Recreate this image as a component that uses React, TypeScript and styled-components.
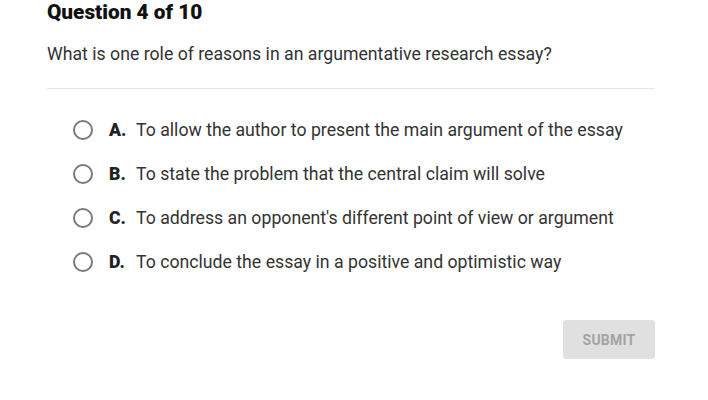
import styled, { createGlobalStyle } from "styled-components";

const GlobalStyle = createGlobalStyle`
  html, body {
    margin: 0;
    padding: 0;
    background: #ffffff;
  }
  body {
    font-family: Roboto, "Liberation Sans", Arial, sans-serif;
  }
`;

const Page = styled.div`
  width: 708px;
  height: 400px;
  padding: 0 53px 0 47px;
  box-sizing: border-box;
  display: flex;
  flex-direction: column;
`;

const Title = styled.h1`
  margin: 0;
  font-size: 20.8px;
  line-height: 25px;
  font-weight: 900;
  color: #111;
`;

const Prompt = styled.p`
  margin: 18px 0 0;
  font-size: 17.7px;
  line-height: 22px;
  color: #333;
`;

const Divider = styled.hr`
  margin: 23px 0 0;
  border: 0;
  border-top: 1px solid #e6e6e6;
`;

const Options = styled.ul`
  list-style: none;
  margin: 30px 0 0;
  padding: 0 0 0 26px;
  display: flex;
  flex-direction: column;
  gap: 22px;
`;

const Option = styled.li`
  display: flex;
  align-items: center;
  height: 22px;
  font-size: 17.7px;
  color: #333;
`;

const Radio = styled.span`
  width: 16px;
  height: 16px;
  border: 2px solid #7a7a7a;
  border-radius: 50%;
  margin-right: 16px;
  flex-shrink: 0;
`;

const Letter = styled.b`
  font-weight: 900;
  color: #222;
  width: 27px;
`;

const Footer = styled.div`
  margin-top: 47px;
  display: flex;
  justify-content: flex-end;
`;

const SubmitButton = styled.button`
  width: 92px;
  height: 39px;
  border: 0;
  border-radius: 3px;
  background: #e0e0e0;
  color: #a3a3a3;
  font-family: Roboto, "Liberation Sans", Arial, sans-serif;
  font-size: 14px;
  font-weight: 700;
  letter-spacing: 0.2px;
`;

const answers = [
  { letter: "A.", text: "To allow the author to present the main argument of the essay" },
  { letter: "B.", text: "To state the problem that the central claim will solve" },
  { letter: "C.", text: "To address an opponent's different point of view or argument" },
  { letter: "D.", text: "To conclude the essay in a positive and optimistic way" },
];

export default function App() {
  return (
    <>
      <GlobalStyle />
      <Page>
        <Title>Question 4 of 10</Title>
        <Prompt>What is one role of reasons in an argumentative research essay?</Prompt>
        <Divider />
        <Options>
          {answers.map((a) => (
            <Option key={a.letter}>
              <Radio />
              <Letter>{a.letter}</Letter>
              <span>{a.text}</span>
            </Option>
          ))}
        </Options>
        <Footer>
          <SubmitButton>SUBMIT</SubmitButton>
        </Footer>
      </Page>
    </>
  );
}
